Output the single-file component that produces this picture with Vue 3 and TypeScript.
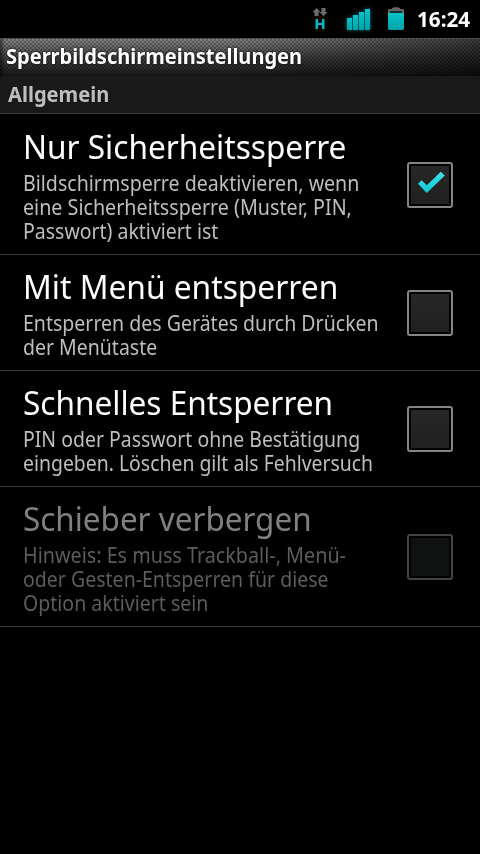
<script setup lang="ts">
interface SummaryLine {
  text: string
  stretch: number
}

interface Preference {
  title: string
  stretch: number
  summary: SummaryLine[]
  checked: boolean
  disabled: boolean
}

const preferences: Preference[] = [
  {
    title: 'Nur Sicherheitssperre',
    stretch: 0.957,
    summary: [
      { text: 'Bildschirmsperre deaktivieren, wenn', stretch: 0.933 },
      { text: 'eine Sicherheitssperre (Muster, PIN,', stretch: 0.938 },
      { text: 'Passwort) aktiviert ist', stretch: 0.928 },
    ],
    checked: true,
    disabled: false,
  },
  {
    title: 'Mit Menü entsperren',
    stretch: 0.961,
    summary: [
      { text: 'Entsperren des Gerätes durch Drücken', stretch: 0.93 },
      { text: 'der Menütaste', stretch: 0.928 },
    ],
    checked: false,
    disabled: false,
  },
  {
    title: 'Schnelles Entsperren',
    stretch: 0.956,
    summary: [
      { text: 'PIN oder Passwort ohne Bestätigung', stretch: 0.926 },
      { text: 'eingeben. Löschen gilt als Fehlversuch', stretch: 0.924 },
    ],
    checked: false,
    disabled: false,
  },
  {
    title: 'Schieber verbergen',
    stretch: 0.952,
    summary: [
      { text: 'Hinweis: Es muss Trackball-, Menü-', stretch: 0.941 },
      { text: 'oder Gesten-Entsperren für diese', stretch: 0.93 },
      { text: 'Option aktiviert sein', stretch: 0.93 },
    ],
    checked: false,
    disabled: true,
  },
]
</script>

<template>
  <main class="screen">
    <header class="status">
      <svg class="network" width="18" height="24" viewBox="0 0 18 24">
        <path fill="#6b6b6b" d="M5.5 1 9.5 5.2H7.5V9H3.5V5.2H1.5ZM10.5 1H14.5V5H16.5L12.5 9.2 8.5 5H10.5Z" />
        <path fill="#00b9c3" d="M4.5 12H7V15.8H11V12H13.5V22H11V18H7V22H4.5Z" />
      </svg>
      <svg class="signal" width="24" height="24" viewBox="0 0 24 24">
        <defs>
          <linearGradient id="cyan" x1="0" y1="0" x2="0" y2="1">
            <stop offset="0" stop-color="#08c3c8" />
            <stop offset="1" stop-color="#00a3a8" />
          </linearGradient>
        </defs>
        <g fill="url(#cyan)">
          <rect x="0" y="11" width="5" height="12" />
          <rect x="6" y="8" width="5" height="15" />
          <rect x="12" y="5" width="5" height="18" />
          <rect x="18" y="2" width="5" height="21" />
        </g>
      </svg>
      <svg class="battery" width="18" height="24" viewBox="0 0 18 24">
        <path fill="#666" d="M5 2V1.2L7 .2H11L13 1.2V2H16L17 3V7H1V3L2 2Z" />
        <rect x="3" y="4" width="12" height="2" fill="#123033" />
        <path fill="url(#cyan)" d="M1 6H17V22L16 23H2L1 22Z" />
      </svg>
      <time class="clock"><span class="fit">16:24</span></time>
    </header>
    <h1 class="bar"><span class="fit">Sperrbildschirmeinstellungen</span></h1>
    <h2 class="category"><span class="fit">Allgemein</span></h2>
    <ul class="list">
      <li v-for="item in preferences" :key="item.title" class="row" :class="{ disabled: item.disabled }">
        <div class="text">
          <div class="title">
            <span class="fit" :style="{ transform: `scaleX(${item.stretch})` }">{{ item.title }}</span>
          </div>
          <div v-for="line in item.summary" :key="line.text" class="summary">
            <span class="fit" :style="{ transform: `scaleX(${line.stretch})` }">{{ line.text }}</span>
          </div>
        </div>
        <div class="box">
          <svg v-if="item.checked" width="30" height="26" viewBox="0 0 30 26">
            <defs>
              <linearGradient id="tick" x1="0" y1="0" x2="0" y2="1">
                <stop offset="0" stop-color="#45e0e8" />
                <stop offset="1" stop-color="#0cc8d4" />
              </linearGradient>
            </defs>
            <path fill="url(#tick)" d="M3 12.7 6.5 9.2 11.8 14.2 25.8 .8 29.8 4.6 11.8 22Z" />
          </svg>
        </div>
      </li>
    </ul>
  </main>
</template>

<style>
body {
  background: #000;
}
</style>

<style scoped>
.screen {
  width: 480px;
  height: 854px;
  overflow: hidden;
  background: #000;
  color: #fff;
  font-family: "Noto Sans", "Open Sans", sans-serif;
}
.fit {
  display: inline-block;
  white-space: nowrap;
  transform-origin: 0 50%;
}
.status {
  display: flex;
  height: 38px;
  box-sizing: border-box;
  padding: 7px 0 0 311px;
}
.signal {
  margin-left: 18px;
  filter: drop-shadow(0 0 2px #007078);
}
.battery {
  margin-left: 16px;
}
.clock {
  width: 62px;
  margin-left: 12px;
  font-size: 21px;
  line-height: 25px;
  font-weight: 700;
}
.clock .fit {
  transform: scaleX(0.985);
}
.bar {
  height: 38px;
  box-sizing: border-box;
  margin: 0;
  padding-left: 6px;
  border-top: 1px solid #4b4b4b;
  background:
    repeating-conic-gradient(rgba(0, 0, 0, 0.28) 0 25%, transparent 0 50%) 0 0 / 4px 4px,
    linear-gradient(90deg, rgba(0, 0, 0, 0.5), transparent 5px, transparent 230px, rgba(0, 0, 0, 0.55)),
    linear-gradient(#858585, #454545 50%, #181818);
  font-size: 21px;
  line-height: 34px;
  font-weight: 700;
  text-shadow: 0 0 3px #000;
}
.bar .fit {
  transform: scaleX(0.954);
}
.category {
  height: 38px;
  box-sizing: border-box;
  margin: 0;
  padding-left: 8px;
  border-bottom: 1px solid #393939;
  background: #191919;
  color: #bebebe;
  font-size: 21px;
  line-height: 37px;
  font-weight: 700;
}
.category .fit {
  transform: scaleX(0.957);
}
.list {
  margin: 0;
  padding: 1px 0 0;
  list-style: none;
}
.row {
  display: flex;
  align-items: center;
  justify-content: space-between;
  padding: 12px 27px 11px 23px;
  border-bottom: 1px solid #3b3b3b;
}
.text {
  width: 370px;
}
.title {
  height: 44px;
  font-size: 33px;
  line-height: 40px;
}
.summary {
  height: 24px;
  color: #bebebe;
  font-size: 21px;
  line-height: 24px;
}
.box {
  display: flex;
  align-items: center;
  justify-content: center;
  width: 46px;
  height: 46px;
  box-sizing: border-box;
  border: 2px solid #858585;
  border-radius: 3px;
  background: linear-gradient(#272727, #202020) padding-box;
  box-shadow: inset 0 0 0 2px #000;
}
.box svg {
  display: block;
  flex: none;
  margin-bottom: 3px;
}
.disabled .title {
  color: #808080;
}
.disabled .summary {
  color: #5c5c5c;
}
.disabled .box {
  border-color: #434343;
  background: #101111;
}
</style>
